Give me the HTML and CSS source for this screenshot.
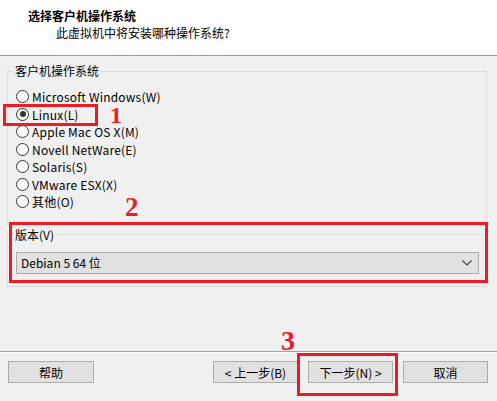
FILE: index.html
```html
<!DOCTYPE html>
<html lang="zh-CN">
<head>
  <meta charset="UTF-8">
  <title>新建虚拟机向导</title>
  <link rel="stylesheet" href="styles.css">
</head>
<body>
  <div class="wizard">
    <div class="header">
      <div class="title">选择客户机操作系统</div>
      <div class="subtitle">此虚拟机中将安装哪种操作系统?</div>
    </div>

    <div class="content">
      <fieldset class="group group-os">
        <legend>客户机操作系统</legend>
        <div class="radio"><span class="dot"></span>Microsoft Windows(W)</div>
        <div class="radio checked"><span class="dot"></span>Linux(L)</div>
        <div class="radio"><span class="dot"></span>Apple Mac OS X(M)</div>
        <div class="radio"><span class="dot"></span>Novell NetWare(E)</div>
        <div class="radio"><span class="dot"></span>Solaris(S)</div>
        <div class="radio"><span class="dot"></span>VMware ESX(X)</div>
        <div class="radio"><span class="dot"></span>其他(O)</div>
      </fieldset>

      <fieldset class="group group-version">
        <legend>版本(V)</legend>
        <div class="select">
          <span>Debian 5 64 位</span>
          <svg class="chevron" width="10" height="6" viewBox="0 0 10 6">
            <polyline points="0.5,0.5 5,5 9.5,0.5" fill="none" stroke="#444" stroke-width="1.2"/>
          </svg>
        </div>
      </fieldset>
    </div>

    <div class="footer">
      <button class="btn btn-help">帮助</button>
      <div class="nav">
        <button class="btn">&lt; 上一步(B)</button>
        <button class="btn">下一步(N) &gt;</button>
        <button class="btn">取消</button>
      </div>
    </div>
  </div>

  <!-- annotations -->
  <div class="mark mark-1"></div>
  <div class="num num-1">1</div>
  <div class="mark mark-2"></div>
  <div class="num num-2">2</div>
  <div class="mark mark-3"></div>
  <div class="num num-3">3</div>
</body>
</html>
```

FILE: styles.css
```css
body {
  margin: 0;
  background-color: #f0f0f0;
  font-family: "Noto Sans CJK SC", "Noto Sans", sans-serif;
  font-size: 12px;
  color: #000;
}
.wizard {
  width: 497px;
  height: 401px;
  display: flex;
  flex-direction: column;
}
.header {
  height: 56px;
  background-color: #fff;
  border-bottom: 1px solid #a0a0a0;
  padding-top: 8px;
  box-sizing: border-box;
  line-height: 16px;
}
.title {
  font-weight: bold;
  padding-left: 28px;
}
.subtitle {
  margin-top: 1px;
  padding-left: 56px;
}
.content {
  flex: 1;
  padding: 0 10px 0 7px;
}
.group {
  margin: 0;
  border: 1px solid #dcdcdc;
  padding: 0 5px;
  min-width: 0;
}
.group legend {
  padding: 0 2px;
  line-height: 16px;
}
.group-os {
  margin-top: 7px;
  padding-top: 9px;
  padding-bottom: 13px;
}
.group-version {
  margin-top: 2px;
  padding-top: 9px;
  padding-bottom: 12px;
}
.radio {
  height: 17.5px;
  display: flex;
  align-items: center;
  padding-left: 3px;
  white-space: nowrap;
  letter-spacing: 0.2px;
}
.dot {
  width: 11px;
  height: 11px;
  border: 1px solid #333;
  border-radius: 50%;
  background-color: #fff;
  margin-right: 3px;
  display: flex;
  align-items: center;
  justify-content: center;
  flex-shrink: 0;
}
.radio.checked .dot::after {
  content: "";
  width: 6px;
  height: 6px;
  border-radius: 50%;
  background-color: #333;
}
.select {
  margin: 0 2px 0 3px;
  height: 22px;
  box-sizing: border-box;
  border: 1px solid #adadad;
  background-color: #e1e1e1;
  display: flex;
  align-items: center;
  justify-content: space-between;
  padding: 0 6px 0 4px;
}
.footer {
  height: 40px;
  border-top: 1px solid #a0a0a0;
  box-shadow: inset 0 1px #fff;
  padding: 9px 9px 0 8px;
  display: flex;
  justify-content: space-between;
  align-items: flex-start;
}
.nav {
  display: flex;
  gap: 10px;
}
.btn {
  width: 85px;
  height: 22px;
  border: 1px solid #adadad;
  background-color: #e1e1e1;
  font-family: inherit;
  font-size: 12px;
  color: #000;
  padding: 0;
}
.btn-help {
  width: 86px;
}
.mark {
  position: absolute;
  border: 3px solid #ed1c24;
  box-sizing: border-box;
}
.mark-1 { left: 3px; top: 104px; width: 95px; height: 22px; }
.mark-2 { left: 9px; top: 222px; width: 479px; height: 61px; }
.mark-3 { left: 297px; top: 353px; width: 101px; height: 43px; }
.num {
  position: absolute;
  color: #ed1c24;
  font-family: "Liberation Serif", serif;
  font-weight: bold;
  line-height: 0.7;
}
.num-1 { left: 110px; top: 107px; font-size: 24px; }
.num-2 { left: 125px; top: 198px; font-size: 27px; }
.num-3 { left: 281px; top: 331px; font-size: 28px; }
```
